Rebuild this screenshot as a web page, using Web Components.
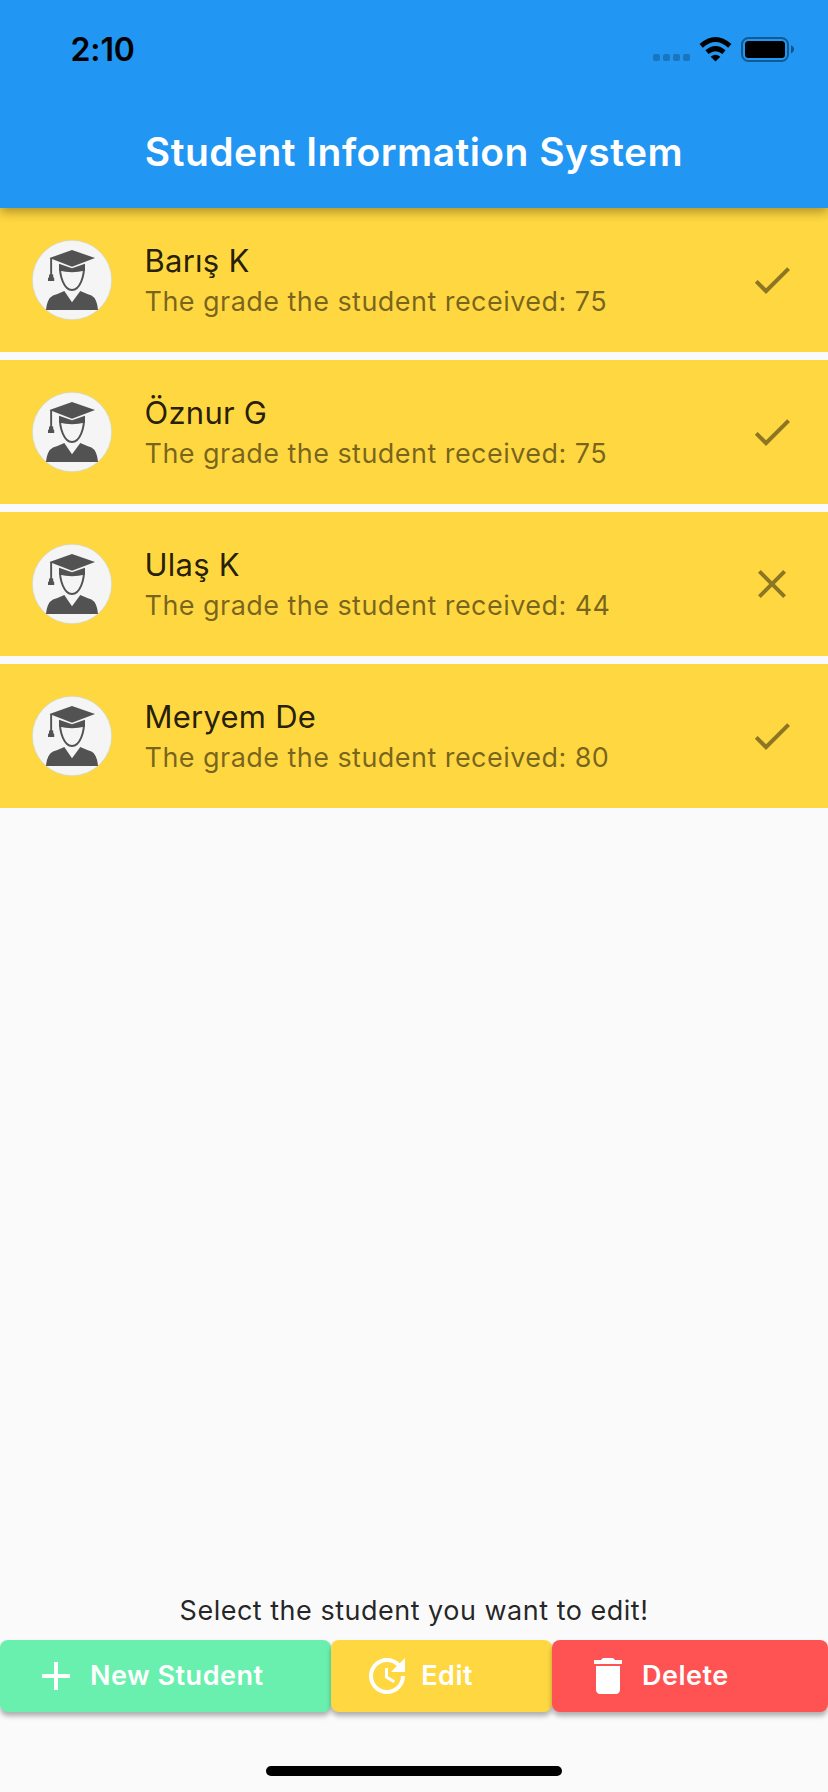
<!DOCTYPE html>
<html lang="en">
<head>
<meta charset="utf-8">
<title>Student Information System</title>
<style>
body{margin:0;background:#fafafa;font-family:Inter,"Liberation Sans",sans-serif}
</style>
</head>
<body>
<student-app></student-app>
<script>
const define=(name,html)=>{
  const t=document.createElement('template');t.innerHTML=html;
  customElements.define(name,class extends HTMLElement{
    constructor(){super();this.attachShadow({mode:'open'}).append(t.content.cloneNode(true));}
  });
};

const icons={
  check:'M9 16.17 4.83 12l-1.42 1.41L9 19 21 7l-1.41-1.41z',
  clear:'M19 6.41 17.59 5 12 10.59 6.41 5 5 6.41 10.59 12 5 17.59 6.41 19 12 13.41 17.59 19 19 17.59 13.41 12z',
  add:'M19 13h-6v6h-2v-6H5v-2h6V5h2v6h6v2z',
  update:'M11 8v5l4.25 2.52.77-1.28-3.52-2.09V8H11zm10 2V3l-2.64 2.64C16.74 4.01 14.49 3 12 3c-4.97 0-9 4.03-9 9s4.03 9 9 9 9-4.03 9-9h-2c0 3.86-3.14 7-7 7s-7-3.14-7-7 3.14-7 7-7c1.93 0 3.68.79 4.95 2.05L14 10h7z',
  delete:'M6 19c0 1.1.9 2 2 2h8c1.1 0 2-.9 2-2V7H6v12zM19 4h-3.5l-1-1h-5l-1 1H5v2h14V4z'
};
customElements.define('md-icon',class extends HTMLElement{
  constructor(){super();this.attachShadow({mode:'open'});}
  connectedCallback(){
    this.shadowRoot.innerHTML=`<style>:host{display:block;width:48px;height:48px;flex:none}svg{display:block}</style>
    <svg width="48" height="48" viewBox="0 0 24 24" fill="currentColor"><path d="${icons[this.getAttribute('name')]}"/></svg>`;
  }
});

define('status-bar',`<style>
:host{display:flex;box-sizing:border-box;height:100px;padding:0 34px 0 70.5px;justify-content:space-between;align-items:flex-start;color:#000}
.time{font-size:32px;font-weight:600;line-height:40px;padding-top:30px;letter-spacing:-.1px}
svg{display:block;margin-top:33px}
</style>
<span class="time">2:10</span>
<svg width="142" height="32" viewBox="652 33 142 32">
 <g fill-opacity=".22"><rect x="653" y="54" width="7" height="7" rx="2"/><rect x="663" y="54" width="7" height="7" rx="2"/><rect x="673" y="54" width="7" height="7" rx="2"/><rect x="683" y="54" width="7" height="7" rx="2"/></g>
 <g transform="translate(0 .6)"><g fill="none" stroke="#000" stroke-width="4.9"><path d="M701.2 45.2Q715.5 32.6 729.8 45.2"/><path d="M707 51.6Q715.5 44.4 724 51.6"/></g>
 <path d="M710.7 56.2Q715.5 52 720.3 56.2L715.5 60.8Z"/></g>
 <rect x="742" y="38" width="46" height="23" rx="6.5" fill="none" stroke="#000" stroke-opacity=".4" stroke-width="2"/>
 <rect x="745" y="41" width="40" height="17" rx="3.5"/>
 <path fill-opacity=".45" d="M791 45.2Q794 46.5 794 49.3T791 53.4Z"/>
</svg>`);

define('app-bar',`<style>
:host{display:block;position:relative;z-index:1;height:208px;background:#2196f3;color:#fff;box-shadow:0 4px 10px rgba(0,0,0,.32)}
h1{margin:0;height:108px;line-height:103px;text-align:center;font-size:39px;font-weight:600;white-space:nowrap;letter-spacing:.45px}
</style>
<status-bar></status-bar><h1><slot></slot></h1>`);

define('student-avatar',`<style>:host{display:block;width:80px;height:80px;flex:none}svg{display:block}</style>
<svg width="80" height="80" viewBox="0 0 80 80">
 <circle cx="40" cy="40" r="39.7" fill="#f5f5f5" stroke="#c7d5c8" stroke-width=".6"/>
 <g fill="#525252">
 <path d="M40 10 63 18 40 26.7 17.5 18Z"/>
 <path d="M27 23.7 40 28.2 53 23.7V30.5Q40 33.8 27 30.5Z"/>
 <path d="M18.2 18h1.9v16.2l1 .2.3 3 .8.5v3H16v-3l.9-.5.3-3 1-.2Z"/>
 <path d="M32.3 51 40 62.3 48.3 51Q55 54 59.5 55.5Q65 58.5 66 70H14Q15 58.5 21 55.5Q26 54 32.3 51Z"/>
 </g>
 <path d="M28 25C27.5 36 32 50 40 50S52.5 36 52 25" fill="none" stroke="#525252" stroke-width="1.9"/>
</svg>`);

define('student-tile',`<style>
:host{display:flex;box-sizing:border-box;height:144px;padding:0 32px;align-items:center;background:#ffd740}
.text{flex:1;padding:3px 0 0 32.5px;white-space:nowrap}
.name{font-size:31px;line-height:39px;letter-spacing:.25px;color:rgba(0,0,0,.87)}
.grade{font-size:27px;line-height:43px;letter-spacing:.45px;color:rgba(0,0,0,.54)}
.state{color:rgba(0,0,0,.45)}
</style>
<student-avatar></student-avatar>
<div class="text"><div class="name"><slot name="name"></slot></div><div class="grade"><slot></slot></div></div>
<div class="state"><slot name="icon"></slot></div>`);

define('action-button',`<style>
:host{display:flex;box-sizing:border-box;height:72px;padding-left:32px;align-items:center;border-radius:8px;color:#fff;font-size:27px;font-weight:600;letter-spacing:.5px;white-space:nowrap;box-shadow:0 4px 5px rgba(0,0,0,.3)}
.label{padding:0 0 2px 10px}
</style><slot name="icon"></slot><span class="label"><slot></slot></span>`);

define('student-app',`<style>
:host{display:flex;flex-direction:column;height:1792px;overflow:hidden}
.list{flex:1;display:flex;flex-direction:column;gap:8px}
.hint{text-align:center;font-size:27px;line-height:40px;letter-spacing:.5px;padding-bottom:9px;color:rgba(0,0,0,.87)}
.actions{display:grid;grid-template-columns:6fr 4fr 5fr}
.home{width:296px;height:10px;border-radius:5px;background:#000;margin:54px auto 16px}
</style>
<app-bar>Student Information System</app-bar>
<div class="list">
<student-tile><span slot="name">Barış K</span>The grade the student received: 75<md-icon slot="icon" name="check"></md-icon></student-tile>
<student-tile><span slot="name">Öznur G</span>The grade the student received: 75<md-icon slot="icon" name="check"></md-icon></student-tile>
<student-tile><span slot="name">Ulaş K</span>The grade the student received: 44<md-icon slot="icon" name="clear"></md-icon></student-tile>
<student-tile><span slot="name">Meryem De</span>The grade the student received: 80<md-icon slot="icon" name="check"></md-icon></student-tile>
</div>
<div class="hint">Select the student you want to edit!</div>
<div class="actions">
<action-button style="background:#69f0ae"><md-icon slot="icon" name="add"></md-icon>New Student</action-button>
<action-button style="background:#ffd740"><md-icon slot="icon" name="update"></md-icon>Edit</action-button>
<action-button style="background:#ff5252"><md-icon slot="icon" name="delete"></md-icon>Delete</action-button>
</div>
<div class="home"></div>`);
</script>
</body>
</html>
